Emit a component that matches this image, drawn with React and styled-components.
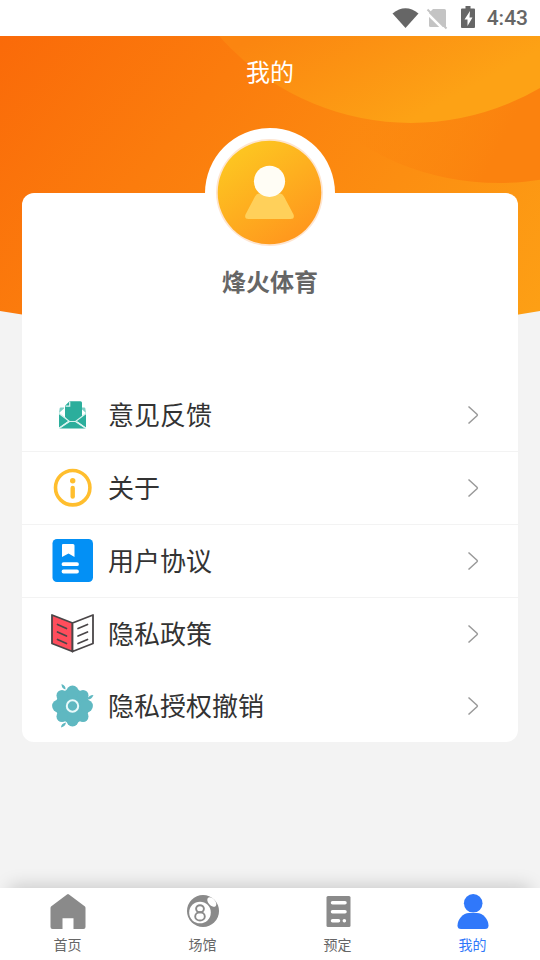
import styled, { createGlobalStyle } from "styled-components";

const GlobalStyle = createGlobalStyle`
  * {
    box-sizing: border-box;
  }

  body {
    margin: 0;
    background-color: #f3f3f3;
    font-family: 'Noto Sans CJK SC', sans-serif;
  }

  button {
    border: 0;
    padding: 0;
    background: none;
    font-family: inherit;
    cursor: pointer;
  }

  svg {
    display: block;
    flex-shrink: 0;
  }
`;

const Page = styled.div`
  display: flex;
  flex-direction: column;
  min-height: 100vh;
`;

const StatusBar = styled.div`
  display: flex;
  align-items: center;
  justify-content: flex-end;
  height: 36px;
  padding-right: 12px;
  background-color: #fff;
  color: #666;
  font-family: Roboto, sans-serif;
  font-size: 21px;
  font-weight: 500;
  line-height: 36px;
`;

const StatusIcons = styled.svg`
  width: 84px;
  height: 24px;
  margin-right: 11px;
`;

/* 배경과 내용을 같은 칸에 겹쳐 놓는다 */
const Main = styled.main`
  flex: 1;
  display: grid;
  grid-template-columns: minmax(0, 1fr);
  align-items: start;

  > * {
    grid-area: 1 / 1;
  }
`;

const Backdrop = styled.svg`
  width: 100%;
  height: 300px;
`;

const Content = styled.div`
  display: flex;
  flex-direction: column;
  padding: 0 22px 24px;
`;

const Title = styled.h1`
  margin: 0 0 87px;
  color: #fff;
  font-size: 24px;
  font-weight: 400;
  line-height: 70px;
  text-align: center;
`;

const Card = styled.section`
  display: flex;
  flex-direction: column;
  align-items: center;
  background-color: #fff;
  border-radius: 12px;
`;

const AvatarRing = styled.div`
  margin-top: -65px;
  border-radius: 50%;
  background-color: #fff;
`;

const Name = styled.h2`
  margin: 7px 0 82px;
  color: #666;
  font-size: 24px;
  font-weight: 700;
  line-height: 32px;
`;

const Menu = styled.ul`
  width: 100%;
  margin: 0;
  padding: 0;
  list-style: none;
`;

const MenuItem = styled.li`
  border-bottom: ${({ $divided }) => ($divided ? "1px solid #f3f3f3" : "0")};
`;

const MenuButton = styled.button`
  display: flex;
  align-items: center;
  gap: 13px;
  width: 100%;
  height: 72px;
  padding: 0 39px 0 29px;
  color: #333;
  font-size: 26px;
  line-height: 36px;
  text-align: left;
`;

const MenuLabel = styled.span`
  flex: 1;
  padding-bottom: 2px;
`;

const TabBar = styled.nav`
  display: flex;
  background-color: #fff;
  box-shadow: 0 -12px 18px -10px rgba(0, 0, 0, 0.18);
`;

const Tab = styled.button`
  flex: 1;
  display: flex;
  flex-direction: column;
  align-items: center;
  gap: 3px;
  height: 72px;
  padding-top: 5px;
  color: ${({ $active }) => ($active ? "#3078fa" : "#666")};
  font-size: 14px;
  line-height: 24px;
`;

const FeedbackIcon = () => (
  <svg width="44" height="44" viewBox="0 0 44 44">
    <path d="M8 20l5-4.500v-1H9.500q-1 0-1 2zM35 20l-5-4.500v-1h3.500q1 0 1 2z" fill="#7fcfc5" />
    <path d="M18.500 8.300h11q1.500 0 1.500 1.500V24l-6 5.500h-6l-5-5.500V12.800z" fill="#2bae9c" />
    <path d="M14.500 13.200h4.200V8.500" fill="none" stroke="#e3f6f3" strokeWidth="1.200" />
    <path
      d="M8 20l9.500 7.800L8 34.500zM35 20l-9.500 7.800 9.500 6.700zM8.500 35.500l10-6.800h6l10 6.800z"
      fill="#2bae9c"
    />
    <path
      d="M8 20.500l10.500 8h6l10.500-8M18.500 28.500l-10.500 7M24.500 28.500l10.500 7"
      fill="none"
      stroke="#d5f1ed"
      strokeWidth="1.200"
    />
  </svg>
);

const AboutIcon = () => (
  <svg width="44" height="44" viewBox="0 0 44 44">
    <circle cx="21.700" cy="21.700" r="17.200" fill="none" stroke="#ffbe2e" strokeWidth="3.600" />
    <circle cx="21.700" cy="14.700" r="2.700" fill="#ffbe2e" />
    <path d="M21.700 22v8.500" stroke="#ffbe2e" strokeWidth="4.400" strokeLinecap="round" />
  </svg>
);

const AgreementIcon = () => (
  <svg width="44" height="44" viewBox="0 0 44 44">
    <rect x="1.500" y="0" width="40.500" height="43" rx="4.500" fill="#0390f5" />
    <path
      d="M12 5h10q1.500 0 1.500 1.500V18l-6-3.500-6.500 3.500V6q0-1 1-1z"
      fill="#fff"
    />
    <path d="M12.500 25.200h13.500M12.500 32.500h13.500" stroke="#fff" strokeWidth="3.800" strokeLinecap="round" />
  </svg>
);

const PolicyIcon = () => (
  <svg width="44" height="44" viewBox="0 0 44 44">
    <g stroke="#4a4648" strokeWidth="1.800" strokeLinejoin="round">
      <path d="M1 3l20.500 8v28.500L1 31.500z" fill="#ff4d5c" />
      <path d="M42 3l-20.500 8v28.500l20.500-8z" fill="#fff" />
    </g>
    <path
      d="M6.500 12.500l9 4M6.500 20l9 4M6.500 27.500l9 4M36.500 12.500l-9.500 4M36.500 20l-9.500 4M36.500 27.500l-9.500 4"
      stroke="#4a4648"
      strokeWidth="1.700"
      strokeLinecap="round"
    />
  </svg>
);

const RevokeIcon = () => (
  <svg width="44" height="44" viewBox="0 0 44 44">
    <g fill="#5fb8c1">
      <circle cx="21.500" cy="22" r="17" />
      {[0, 90, 180, 270].map((deg) => (
        <g key={deg} transform={`rotate(${deg} 21.500 22)`}>
          <circle cx="21.500" cy="7.900" r="6.300" />
          <circle cx="32" cy="11.500" r="5.500" />
        </g>
      ))}
      <path d="M10.500 0q4.500 1.500 4 5.500-4-1-4-5.500zM42.500 11q-2 5-6.500 4.500 1.500-4.500 6.500-4.500zM10 43.500q0-4 5-5-.5 4-5 5z" />
    </g>
    <circle cx="21.500" cy="22" r="5.700" fill="none" stroke="#e9fafb" strokeWidth="2" />
  </svg>
);

const ChevronIcon = () => (
  <svg width="12" height="20" viewBox="0 0 12 20">
    <path d="M1.500 1.500l8.500 7.700q.8.800 0 1.600l-8.500 7.700" fill="none" stroke="#999" strokeWidth="1.500" />
  </svg>
);

const HomeIcon = () => (
  <svg width="36" height="36" viewBox="0 0 36 36">
    <path
      d="M17 1.400q1-.8 2 0L35 13.500q.5.500.5 1.500v19q0 2-2 2h-10V25.300h-11V36h-10q-2 0-2-2V15q0-1 .5-1.500z"
      fill="#8a8a8a"
    />
  </svg>
);

const VenueIcon = () => (
  <svg width="36" height="36" viewBox="0 0 36 36">
    <circle cx="18" cy="18" r="16" fill="#8a8a8a" />
    <circle cx="15" cy="19.500" r="10.800" fill="#fff" />
    <ellipse cx="26.800" cy="9" rx="5.600" ry="3.400" transform="rotate(48 26.800 9)" fill="#fff" />
    <g fill="none" stroke="#8a8a8a" strokeWidth="1.900">
      <ellipse cx="15" cy="15.800" rx="3.900" ry="3.500" />
      <ellipse cx="15" cy="23.400" rx="4.800" ry="4.100" />
    </g>
  </svg>
);

const BookingIcon = () => (
  <svg width="36" height="36" viewBox="0 0 36 36">
    <rect x="6.500" y="3" width="24" height="31" rx="1.500" fill="#8a8a8a" />
    <path
      d="M12.500 9.700H25M12.500 18.700H25M12.500 27.700h6M24.300 27.700h.1"
      stroke="#fff"
      strokeWidth="3.500"
      strokeLinecap="round"
    />
  </svg>
);

const MineIcon = () => (
  <svg width="36" height="36" viewBox="0 0 36 36">
    <circle cx="18.200" cy="10.300" r="9.300" fill="#3078fa" />
    <path d="M14 20h8q4.500 0 8 4 3.500 4 3.500 8.500 0 3.500-3.500 3.500H6q-3.500 0-3.500-3.500 0-4.500 3.500-8.500 3.500-4 8-4z" fill="#3078fa" />
  </svg>
);

const MENU = [
  { label: "意见反馈", Icon: FeedbackIcon, divided: true },
  { label: "关于", Icon: AboutIcon, divided: true },
  { label: "用户协议", Icon: AgreementIcon, divided: true },
  { label: "隐私政策", Icon: PolicyIcon },
  { label: "隐私授权撤销", Icon: RevokeIcon },
];

const TABS = [
  { label: "首页", Icon: HomeIcon },
  { label: "场馆", Icon: VenueIcon },
  { label: "预定", Icon: BookingIcon },
  { label: "我的", Icon: MineIcon, active: true },
];

export default function App() {
  return (
    <Page>
      <GlobalStyle />
      <StatusBar>
        <StatusIcons viewBox="0 0 84 24" aria-hidden="true">
          <path d="M.5 7.500Q13.500-3 26.500 7.500L13.500 22z" fill="#666" />
          <path d="M41 3h11.500q1.500 0 1.500 1.500V21H38.500q-1.500 0-1.500-1.500V7z" fill="#c4c4c4" />
          <path d="M34 6l19 19" stroke="#fff" strokeWidth="2.500" />
          <path d="M35.500 3.500l19 19" stroke="#c4c4c4" strokeWidth="2" />
          <path d="M73.500 0h5v2.500H82q1 0 1 1V21q0 1-1 1H70q-1 0-1-1V3.500q0-1 1-1h3.500z" fill="#666" />
          <path d="M78 5l-5.500 8.500h3V20l5-8.500h-3z" fill="#fff" />
        </StatusIcons>
        <span>4:43</span>
      </StatusBar>

      <Main>
        <Backdrop viewBox="0 0 540 300" preserveAspectRatio="none" aria-hidden="true">
          <defs>
            <linearGradient id="base" gradientUnits="userSpaceOnUse" x1="0" y1="0" x2="460" y2="380">
              <stop offset="0" stopColor="#fa6a09" />
              <stop offset="1" stopColor="#fda015" />
            </linearGradient>
            <linearGradient id="near" gradientUnits="userSpaceOnUse" x1="330" y1="-40" x2="400" y2="90">
              <stop offset="0" stopColor="#fb8510" />
              <stop offset="1" stopColor="#fda215" />
            </linearGradient>
            <linearGradient id="far" gradientUnits="userSpaceOnUse" x1="360" y1="90" x2="480" y2="150">
              <stop offset="0" stopColor="#fb820e" stopOpacity="0" />
              <stop offset="1" stopColor="#fb820e" />
            </linearGradient>
            <clipPath id="hero">
              <path d="M0 0h540v275Q405 298 270 298T0 275z" />
            </clipPath>
          </defs>
          <g clipPath="url(#hero)">
            <rect width="540" height="300" fill="url(#base)" />
            <circle cx="499" cy="-117" r="264" fill="url(#far)" />
            <circle cx="411" cy="-168" r="255" fill="url(#near)" />
          </g>
        </Backdrop>

        <Content>
          <Title>我的</Title>
          <Card>
            <AvatarRing>
              <svg width="130" height="130" viewBox="0 0 130 130" role="img" aria-label="头像">
                <defs>
                  <linearGradient id="avatar" x1="0.200" y1="0.100" x2="0.750" y2="0.900">
                    <stop offset="0" stopColor="#fdc521" />
                    <stop offset="1" stopColor="#ff991d" />
                  </linearGradient>
                </defs>
                <circle cx="64.500" cy="64.500" r="53.500" fill="#fee5d0" />
                <circle cx="64.500" cy="64.500" r="51.800" fill="url(#avatar)" />
                <path
                  d="M54 65.500h21q2.500 0 4 3l9.500 18q1.500 4.500-3 4.500h-42q-4.500 0-3-4.500l9.500-18q1.500-3 4-3z"
                  fill="#ffd05a"
                />
                <circle cx="64.500" cy="53.300" r="15.600" fill="#fffdf5" />
              </svg>
            </AvatarRing>
            <Name>烽火体育</Name>
            <Menu>
              {MENU.map(({ label, Icon, divided }) => (
                <MenuItem key={label} $divided={divided}>
                  <MenuButton type="button">
                    <Icon />
                    <MenuLabel>{label}</MenuLabel>
                    <ChevronIcon />
                  </MenuButton>
                </MenuItem>
              ))}
            </Menu>
          </Card>
        </Content>
      </Main>

      <TabBar>
        {TABS.map(({ label, Icon, active }) => (
          <Tab key={label} type="button" $active={active}>
            <Icon />
            <span>{label}</span>
          </Tab>
        ))}
      </TabBar>
    </Page>
  );
}
